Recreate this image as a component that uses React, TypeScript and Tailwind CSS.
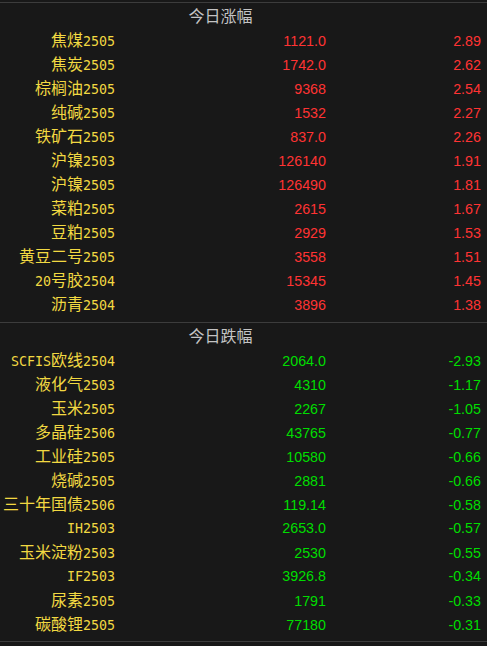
import React from "react"

type Row = [string, string, string]

const up: Row[] = [
    ["焦煤2505", "1121.0", "2.89"],
    ["焦炭2505", "1742.0", "2.62"],
    ["棕榈油2505", "9368", "2.54"],
    ["纯碱2505", "1532", "2.27"],
    ["铁矿石2505", "837.0", "2.26"],
    ["沪镍2503", "126140", "1.91"],
    ["沪镍2505", "126490", "1.81"],
    ["菜粕2505", "2615", "1.67"],
    ["豆粕2505", "2929", "1.53"],
    ["黄豆二号2505", "3558", "1.51"],
    ["20号胶2504", "15345", "1.45"],
    ["沥青2504", "3896", "1.38"],
]

const down: Row[] = [
    ["SCFIS欧线2504", "2064.0", "-2.93"],
    ["液化气2503", "4310", "-1.17"],
    ["玉米2505", "2267", "-1.05"],
    ["多晶硅2506", "43765", "-0.77"],
    ["工业硅2505", "10580", "-0.66"],
    ["烧碱2505", "2881", "-0.66"],
    ["三十年国债2506", "119.14", "-0.58"],
    ["IH2503", "2653.0", "-0.57"],
    ["玉米淀粉2503", "2530", "-0.55"],
    ["IF2503", "3926.8", "-0.34"],
    ["尿素2505", "1791", "-0.33"],
    ["碳酸锂2505", "77180", "-0.31"],
]

// split into ascii / cjk runs so digits get the narrow mono face
function Name({ text }: { text: string }) {
    const parts = text.match(/[\x00-\x7f]+|[^\x00-\x7f]+/g) || []
    return (
        <>
            {parts.map((p, i) =>
                /^[\x00-\x7f]/.test(p) ? (
                    <span key={i} className="font-['DejaVu_Sans_Mono','Noto_Sans_CJK_SC',monospace] text-[13.3px]">
                        {p}
                    </span>
                ) : (
                    <span key={i} className="font-['Noto_Sans_CJK_SC',sans-serif] text-[16px]">
                        {p}
                    </span>
                )
            )}
        </>
    )
}

function Section({ title, rows, color }: { title: string; rows: Row[]; color: string }) {
    return (
        <div>
            <div className="grid grid-cols-[115px_211px_155px] h-6 items-center">
                <div />
                <div className="text-center text-[16px] text-[#c4c4c4] font-['Noto_Sans_CJK_SC',sans-serif] leading-6">
                    {title}
                </div>
                <div />
            </div>
            {rows.map(r => (
                <div key={r[0]} className="grid grid-cols-[115px_211px_155px] h-6 items-center leading-6">
                    <div className="text-right text-[#f2d942] whitespace-nowrap">
                        <Name text={r[0]} />
                    </div>
                    <div className={`text-right text-[14.3px] font-['Liberation_Sans',sans-serif] ${color}`}>{r[1]}</div>
                    <div className={`text-right text-[14.3px] font-['Liberation_Sans',sans-serif] ${color}`}>{r[2]}</div>
                </div>
            ))}
        </div>
    )
}

export default function App() {
    return (
        <div className="w-[487px] h-[646px] bg-[#181818] overflow-hidden">
            <div className="h-[2px]" />
            <div className="border-t border-[#3c3c3c] pb-[7px]">
                <Section title="今日涨幅" rows={up} color="text-[#ff3333]" />
            </div>
            <div className="border-t border-[#3c3c3c] pb-[6px]">
                <Section title="今日跌幅" rows={down} color="text-[#00dd00]" />
            </div>
            <div className="border-t border-[#3c3c3c]" />
        </div>
    )
}
